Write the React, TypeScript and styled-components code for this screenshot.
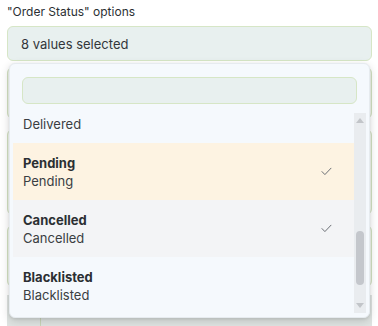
import React, { useLayoutEffect, useRef } from 'react';
import styled, { createGlobalStyle } from 'styled-components';

type Option = {
  label: string;
  selected: boolean;
  highlighted?: boolean;
};

const options: Option[] = [
  { label: 'Delivered', selected: false },
  { label: 'Pending', selected: true, highlighted: true },
  { label: 'Cancelled', selected: true },
  { label: 'Blacklisted', selected: false },
  { label: 'Returned', selected: false },
];

const Check = () => (
  <svg width="11" height="9" viewBox="0 0 11 9" fill="none">
    <path d="M1 4.6 L3.9 7.6 L10 1.2" stroke="#6b6f75" strokeWidth="1" strokeLinecap="round" strokeLinejoin="round" />
  </svg>
);

const App: React.FC = () => {
  const listRef = useRef<HTMLDivElement>(null);

  useLayoutEffect(() => {
    if (listRef.current) listRef.current.scrollTop = 27;
  }, []);

  return (
    <>
      <GlobalStyle />
      <Page>
        <Label>"Order Status" options</Label>
        <Field>
          <Trigger>8 values selected</Trigger>
          <Backdrop>
            <GhostRow $height={50} />
            <GhostRow $height={84} />
            <GhostRow $height={60} />
            <Nested>
              <NestedRow>
                <span>Yellow</span>
                <span>⌄</span>
              </NestedRow>
            </Nested>
          </Backdrop>

          <Menu>
            <Search />
            <Viewport>
              <List ref={listRef}>
                {options.map((o) => (
                  <Item key={o.label} $selected={o.selected} $highlighted={o.highlighted}>
                    <ItemText>
                      <Title>{o.label}</Title>
                      <Sub>{o.label}</Sub>
                    </ItemText>
                    {o.selected && <Check />}
                  </Item>
                ))}
              </List>
              <Scrollbar>
                <Arrow $up />
                <Track>
                  <Thumb />
                </Track>
                <Arrow />
              </Scrollbar>
            </Viewport>
          </Menu>
        </Field>
      </Page>
    </>
  );
};

export default App;

const GlobalStyle = createGlobalStyle`
  html, body {
    margin: 0;
    padding: 0;
    background: #ffffff;
    font-family: Inter, "Noto Sans", sans-serif;
    color: #2b2f33;
    overflow: hidden;
  }
`;

const Page = styled.div`
  width: 378px;
  height: 326px;
  padding: 4px 6px 0 7px;
  box-sizing: border-box;
  overflow: hidden;
`;

const Label = styled.div`
  font-size: 12px;
  line-height: 16px;
  color: #2b2f33;
  margin-bottom: 6px;
`;

const Field = styled.div`
  position: relative;
`;

const Trigger = styled.div`
  height: 35px;
  box-sizing: border-box;
  border: 1px solid #d6e6c6;
  border-radius: 6px;
  background: #e8f0ef;
  padding: 0 13px;
  display: flex;
  align-items: center;
  font-size: 13px;
  color: #33373b;
`;

const Backdrop = styled.div`
  display: flex;
  flex-direction: column;
  gap: 10px;
  padding-top: 6px;
`;

const GhostRow = styled.div<{ $height: number }>`
  height: ${({ $height }) => $height}px;
  border: 1px solid #d3e2c2;
  border-radius: 6px;
  background: #f4f8f1;
`;

const Nested = styled.div`
  margin-top: -2px;
  background: #dfe4e2;
  padding-left: 33px;
  height: 40px;
`;

const NestedRow = styled.div`
  border-left: 1px solid #c9d6b8;
  margin-right: 12px;
  padding: 0 12px;
  height: 40px;
  display: flex;
  justify-content: space-between;
  font-size: 13px;
  color: #444;
  padding-top: 2px;
`;

const Menu = styled.div`
  position: absolute;
  top: 37px;
  left: 2px;
  width: 361px;
  height: 255px;
  box-sizing: border-box;
  background: #f5f9fd;
  border: 1px solid #e6ebef;
  border-radius: 6px;
  box-shadow: 0 3px 10px rgb(0 0 0 / 16%), 0 1px 3px rgb(0 0 0 / 8%);
  padding: 13px 3px 4px 3px;
  display: flex;
  flex-direction: column;
`;

const Search = styled.div`
  height: 27px;
  box-sizing: border-box;
  margin: 0 9px 0 9px;
  border: 1px solid #d6e6c6;
  border-radius: 6px;
  background: #e8f0ef;
`;

const Viewport = styled.div`
  margin-top: 9px;
  height: 200px;
  display: flex;
`;

const List = styled.div`
  flex: 1;
  overflow: hidden;
`;

const Item = styled.div<{ $selected: boolean; $highlighted?: boolean }>`
  height: 57px;
  box-sizing: border-box;
  padding: 0 22px 0 10px;
  display: flex;
  align-items: center;
  justify-content: space-between;
  background: ${({ $selected, $highlighted }) =>
    $highlighted ? '#fdf3e2' : $selected ? '#f3f4f6' : '#f5f9fd'};
`;

const ItemText = styled.div`
  display: flex;
  flex-direction: column;
  gap: 2px;
`;

const Title = styled.div`
  font-size: 13px;
  line-height: 16px;
  font-weight: 700;
  color: #2b2f33;
`;

const Sub = styled.div`
  font-size: 13px;
  line-height: 16px;
  color: #3a3e42;
`;

const Scrollbar = styled.div`
  width: 12px;
  background: #e9ecef;
  display: flex;
  flex-direction: column;
  align-items: center;
`;

const Arrow = styled.div<{ $up?: boolean }>`
  width: 0;
  height: 0;
  margin: ${({ $up }) => ($up ? '5px 0 6px' : '6px 0 5px')};
  border-left: 4px solid transparent;
  border-right: 4px solid transparent;
  ${({ $up }) => ($up ? 'border-bottom: 5px solid #c2c5c9;' : 'border-top: 5px solid #c2c5c9;')}
`;

const Track = styled.div`
  flex: 1;
  width: 100%;
  display: flex;
  flex-direction: column;
  justify-content: flex-end;
  padding: 0 2px 12px;
  box-sizing: border-box;
`;

const Thumb = styled.div`
  height: 54px;
  border-radius: 4px;
  background: #c4c7cc;
`;
